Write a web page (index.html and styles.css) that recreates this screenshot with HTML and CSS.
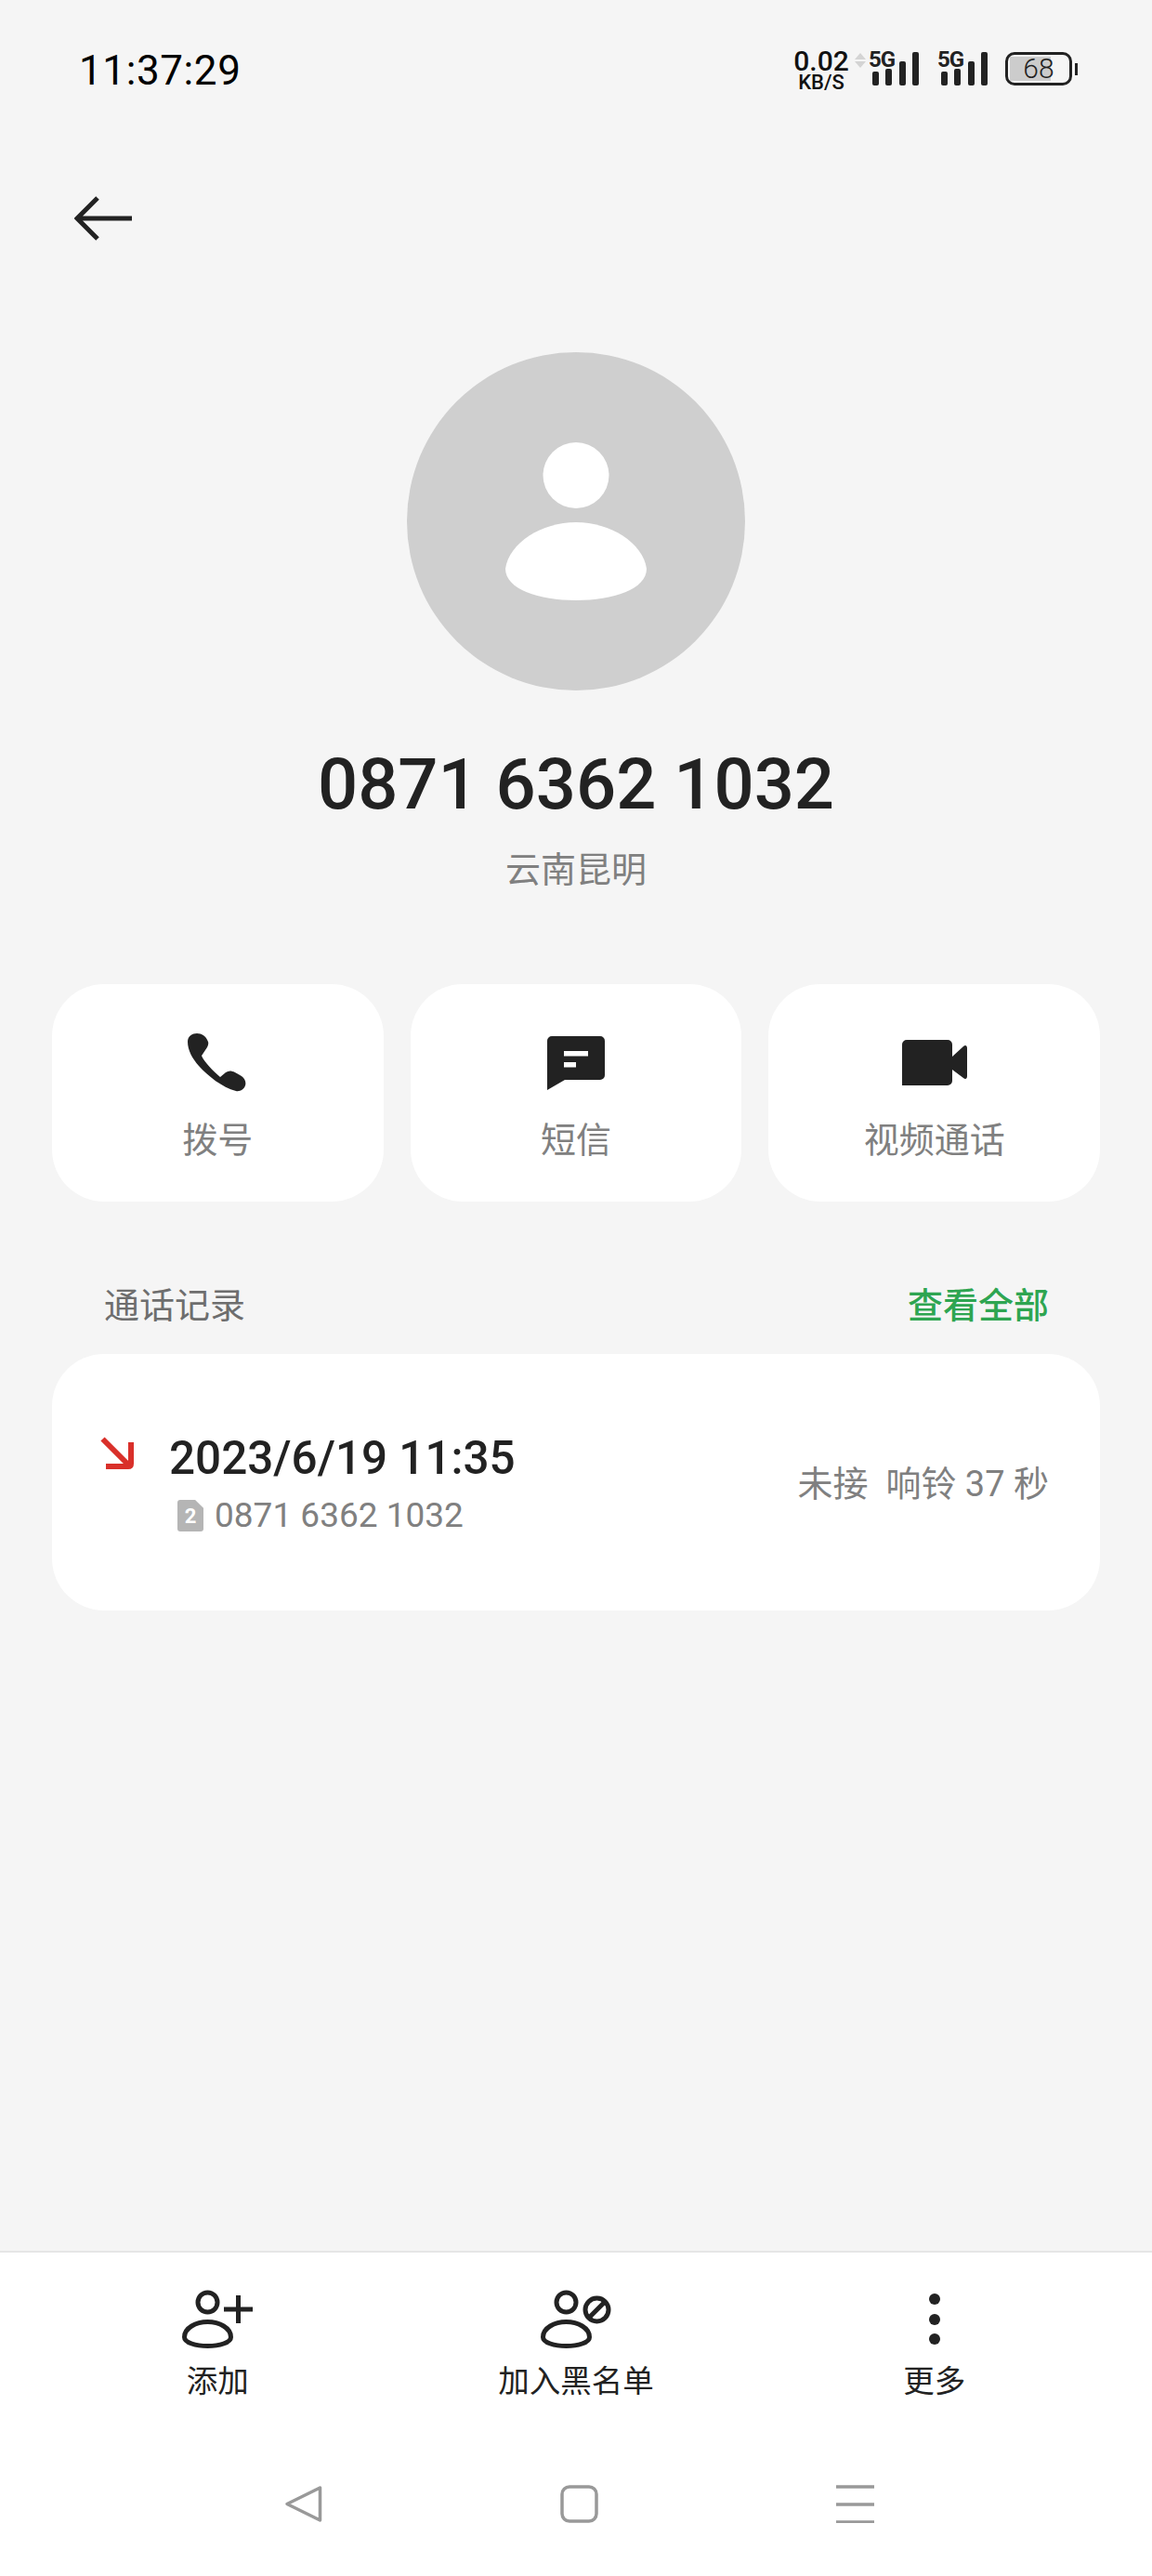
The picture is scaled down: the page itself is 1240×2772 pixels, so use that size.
FILE: index.html
```html
<!DOCTYPE html>
<html lang="zh-CN">
<head>
    <meta charset="UTF-8">
    <meta name="viewport" content="width=device-width, initial-scale=1.0">
    <title>通话详情</title>
    <link rel="stylesheet" href="styles.css">
</head>
<body>
    <div class="page">
        <!-- 状态栏 -->
        <div class="status-bar">
            <span class="clock">11:37:29</span>
            <div class="status-icons">
                <div class="net-speed">
                    <span class="net-value">0.02</span>
                    <span class="net-unit">KB/S</span>
                </div>
                <svg class="net-arrows" width="12" height="16" viewBox="0 0 12 16">
                    <path d="M6 0 L12 7 H0 Z M0 9 H12 L6 16 Z" fill="#d4d4d4"/>
                </svg>
                <svg class="signal" width="54" height="48" viewBox="0 0 54 48">
                    <text class="signal-text" x="0" y="22">5G</text>
                    <rect x="4" y="27" width="7" height="15" rx="2"/>
                    <rect x="18" y="24" width="7" height="18" rx="2"/>
                    <rect x="33" y="16" width="7" height="26" rx="2"/>
                    <rect x="47" y="6" width="7" height="36" rx="2"/>
                </svg>
                <svg class="signal" width="54" height="48" viewBox="0 0 54 48">
                    <text class="signal-text" x="0" y="22">5G</text>
                    <rect x="4" y="27" width="7" height="15" rx="2"/>
                    <rect x="18" y="24" width="7" height="18" rx="2"/>
                    <rect x="33" y="16" width="7" height="26" rx="2"/>
                    <rect x="47" y="6" width="7" height="36" rx="2"/>
                </svg>
                <div class="battery">
                    <div class="battery-body">68</div>
                    <div class="battery-nub"></div>
                </div>
            </div>
        </div>

        <!-- 返回 -->
        <svg class="back-icon" width="64" height="48" viewBox="0 0 64 48">
            <path d="M25 2 L3 24 L25 46 M3 24 H62" fill="none" stroke="#222" stroke-width="5"/>
        </svg>

        <!-- 头像和号码 -->
        <div class="avatar">
            <svg width="364" height="364" viewBox="0 0 364 364">
                <circle cx="182" cy="132.5" r="35.5" fill="#fff"/>
                <path d="M106 233 C110 205 145 183 182 183 C219 183 254 205 258 233 C258 255 222 267 182 267 C142 267 106 255 106 233 Z" fill="#fff"/>
            </svg>
        </div>
        <h1 class="phone-number">0871 6362 1032</h1>
        <p class="location">云南昆明</p>

        <!-- 操作按钮 -->
        <div class="action-grid">
            <div class="action-card">
                <div class="action-icon">
                    <svg width="70" height="68" viewBox="10 8 70 68">
                        <path d="M13 20 C13 14 18 11 23 11 C28 11 33 14 35 20 C36 23 34 26 32 29 L28 35 C30 41 41 52 48 58 L54 53 C57 51 60 51 64 53 L71 57 C75 60 76 64 75 67 C74 71 69 74 65 73 C50 69 35 57 25 46 C18 38 13 29 13 20 Z" fill="#222"/>
                    </svg>
                </div>
                <span class="action-label">拨号</span>
            </div>
            <div class="action-card">
                <div class="action-icon">
                    <svg width="68" height="64" viewBox="10 12 68 64">
                        <path fill-rule="evenodd" d="M13 21 a5 5 0 0 1 5-5 H70 a5 5 0 0 1 5 5 V58 a5 5 0 0 1 -5 5 H32 L13 74 Z M31 32 H57 V37.5 H31 Z M31 44 H44 V49.5 H31 Z" fill="#222"/>
                    </svg>
                </div>
                <span class="action-label">短信</span>
            </div>
            <div class="action-card">
                <div class="action-icon">
                    <svg width="74" height="53" viewBox="8 11 74 53">
                        <path d="M15 13 H59 a5 5 0 0 1 5 5 V31 L76 20 C78 18 80 19 80 22 V52 C80 55 78 56 76 54 L64 45 V57 a5 5 0 0 1 -5 5 H10 V18 a5 5 0 0 1 5-5 Z" fill="#222"/>
                    </svg>
                </div>
                <span class="action-label">视频通话</span>
            </div>
        </div>

        <!-- 通话记录 -->
        <div class="section-head">
            <span class="section-title">通话记录</span>
            <span class="section-link">查看全部</span>
        </div>
        <div class="call-card">
            <div class="call-main">
                <svg class="call-arrow" width="36" height="36" viewBox="18 16 36 36">
                    <path d="M20.5 18.5 L48 46 M24 48 H48 Q51 48 51 45 V22" fill="none" stroke="#d9302a" stroke-width="6"/>
                </svg>
                <div class="call-info">
                    <div class="call-date">2023/6/19 11:35</div>
                    <div class="call-sub">
                        <span class="sim-badge">2</span>
                        <span>0871 6362 1032</span>
                    </div>
                </div>
            </div>
            <span class="call-status">未接&nbsp;&nbsp;响铃 37 秒</span>
        </div>

        <!-- 底部工具栏 -->
        <div class="bottom-bar">
            <div class="tool-grid">
                <div class="tool-item">
                    <div class="tool-icon">
                        <svg width="80" height="66" viewBox="10 8 80 66">
                            <g fill="none" stroke="#222" stroke-width="5">
                                <circle cx="39.5" cy="22.5" r="10.5"/>
                                <path d="M14.5 60 C14.5 50 27 43.5 39.5 43.5 C52 43.5 64.5 50 64.5 60 C64.5 66 52 69.5 39.5 69.5 C27 69.5 14.5 66 14.5 60 Z"/>
                                <path d="M57 30 H88 M72.5 15 V45"/>
                            </g>
                        </svg>
                    </div>
                    <span class="tool-label">添加</span>
                </div>
                <div class="tool-item">
                    <div class="tool-icon">
                        <svg width="80" height="66" viewBox="10 8 80 66">
                            <g fill="none" stroke="#222" stroke-width="5">
                                <circle cx="39.5" cy="22.5" r="10.5"/>
                                <path d="M14.5 60 C14.5 50 27 43.5 39.5 43.5 C52 43.5 64.5 50 64.5 60 C64.5 66 52 69.5 39.5 69.5 C27 69.5 14.5 66 14.5 60 Z"/>
                                <circle cx="72.5" cy="30.5" r="12.5"/>
                                <path d="M64 39 L81 22"/>
                            </g>
                        </svg>
                    </div>
                    <span class="tool-label">加入黑名单</span>
                </div>
                <div class="tool-item">
                    <div class="tool-icon">
                        <svg width="12" height="56" viewBox="0 0 12 56">
                            <circle cx="6" cy="6" r="6" fill="#222"/>
                            <circle cx="6" cy="28" r="6" fill="#222"/>
                            <circle cx="6" cy="49" r="6" fill="#222"/>
                        </svg>
                    </div>
                    <span class="tool-label">更多</span>
                </div>
            </div>

            <!-- 系统导航 -->
            <div class="nav-bar">
                <svg width="41" height="41" viewBox="0 0 41 41">
                    <path d="M38.5 3 V38 L3 20.5 Z" fill="none" stroke="#999" stroke-width="3.5" stroke-linejoin="round"/>
                </svg>
                <svg width="41" height="41" viewBox="0 0 41 41">
                    <rect x="2" y="2" width="37" height="37" rx="8" fill="none" stroke="#999" stroke-width="3.5"/>
                </svg>
                <svg width="41" height="41" viewBox="0 0 41 41">
                    <path d="M0 2 H41 M0 21 H41 M0 40 H41" fill="none" stroke="#999" stroke-width="3.5"/>
                </svg>
            </div>
        </div>
    </div>
</body>
</html>
```

FILE: styles.css
```css
* {
    box-sizing: border-box;
}

body {
    margin: 0;
    background-color: #f5f5f5;
    font-family: Roboto, "Noto Sans CJK SC", sans-serif;
    color: #222;
}

.page {
    display: flex;
    flex-direction: column;
    width: 1240px;
    height: 2772px;
    overflow: hidden;
}

/* 状态栏 */
.status-bar {
    display: flex;
    justify-content: space-between;
    align-items: center;
    flex-shrink: 0;
    height: 148px;
    padding: 0 80px 0 85px;
}

.clock {
    margin-top: 4px;
    font-size: 44px;
    letter-spacing: 0.6px;
    color: #000;
}

.status-icons {
    display: flex;
    align-items: center;
}

.net-speed {
    display: flex;
    flex-direction: column;
    align-items: center;
    width: 58px;
    padding-top: 3px;
    color: #111;
}

.net-value {
    font-size: 30px;
    line-height: 24px;
    font-weight: 500;
}

.net-unit {
    margin-top: 2px;
    font-size: 22px;
    line-height: 18px;
    font-weight: 500;
}

.net-arrows {
    margin: -18px 0 0 7px;
}

.signal {
    margin-left: 3px;
    fill: #222;
}

.signal + .signal {
    margin-left: 20px;
}

.signal-text {
    font-size: 24px;
    font-weight: 700;
    letter-spacing: -1px;
}

.battery {
    display: flex;
    align-items: center;
    margin-left: 19px;
}

.battery-body {
    width: 72px;
    height: 36px;
    border: 3px solid #222;
    border-radius: 10px;
    background: linear-gradient(#ccc, #ccc) 2px 2px / 44px 26px no-repeat;
    text-align: center;
    font-size: 30px;
    line-height: 30px;
    font-weight: 300;
}

.battery-nub {
    width: 3px;
    height: 13px;
    margin-left: 3px;
    background-color: #222;
}

/* 返回 */
.back-icon {
    flex-shrink: 0;
    margin: 63px 0 0 80px;
}

/* 头像 */
.avatar {
    flex-shrink: 0;
    width: 364px;
    height: 364px;
    margin: 120px auto 0;
    border-radius: 50%;
    background-color: #cfcfcf;
}

.avatar svg {
    display: block;
}

.phone-number {
    margin: 57px 0 0;
    text-align: center;
    font-size: 76px;
    line-height: 88px;
    font-weight: 500;
}

.location {
    margin: 24px 0 0;
    text-align: center;
    font-size: 38px;
    line-height: 48px;
    color: #808080;
}

/* 操作按钮 */
.action-grid {
    display: grid;
    grid-template-columns: repeat(3, 1fr);
    gap: 29px;
    flex-shrink: 0;
    margin-top: 99px;
    padding: 0 56px;
}

.action-card {
    display: flex;
    flex-direction: column;
    align-items: center;
    height: 234px;
    padding-top: 48px;
    border-radius: 56px;
    background-color: #fff;
}

.action-icon,
.tool-icon {
    display: flex;
    justify-content: center;
    align-items: center;
    height: 72px;
}

.action-label {
    margin-top: 24px;
    font-size: 38px;
    line-height: 48px;
    color: #808080;
}

/* 通话记录 */
.section-head {
    display: flex;
    justify-content: space-between;
    margin-top: 88px;
    padding: 0 111px 0 112px;
    font-size: 38px;
    line-height: 48px;
}

.section-title {
    color: #6e6e6e;
}

.section-link {
    color: #2ea551;
    font-weight: 500;
}

.call-card {
    display: flex;
    justify-content: space-between;
    align-items: center;
    height: 276px;
    margin: 28px 56px 0;
    padding: 4px 55px 0 52px;
    border-radius: 56px;
    background-color: #fff;
}

.call-main {
    display: flex;
    gap: 38px;
}

.call-arrow {
    margin-top: 7px;
}

.call-date {
    font-size: 49.4px;
    line-height: 60px;
    font-weight: 500;
}

.call-sub {
    display: flex;
    align-items: center;
    gap: 12px;
    margin: 8px 0 0 9px;
    font-size: 37px;
    line-height: 48px;
    color: #808080;
}

.sim-badge {
    width: 28px;
    height: 34px;
    border-radius: 3px;
    background-color: #b5b5b5;
    clip-path: polygon(0 0, 68% 0, 100% 26%, 100% 100%, 0 100%);
    text-align: center;
    font-size: 22px;
    line-height: 36px;
    font-weight: 700;
    color: #fff;
}

.call-status {
    font-size: 38px;
    line-height: 48px;
    color: #808080;
}

/* 底部工具栏 */
.bottom-bar {
    flex: 1;
    margin-top: 689px;
    border-top: 2px solid #e6e6e6;
    background-color: #fff;
}

.tool-grid {
    display: grid;
    grid-template-columns: repeat(3, 1fr);
    gap: 29px;
    margin-top: 36px;
    padding: 0 56px;
}

.tool-item {
    display: flex;
    flex-direction: column;
    align-items: center;
}

.tool-label {
    margin-top: 9px;
    font-size: 33.5px;
    line-height: 44px;
}

.nav-bar {
    display: flex;
    gap: 256px;
    margin-top: 89px;
    padding-left: 306px;
}

.nav-bar svg {
    display: block;
}
```
